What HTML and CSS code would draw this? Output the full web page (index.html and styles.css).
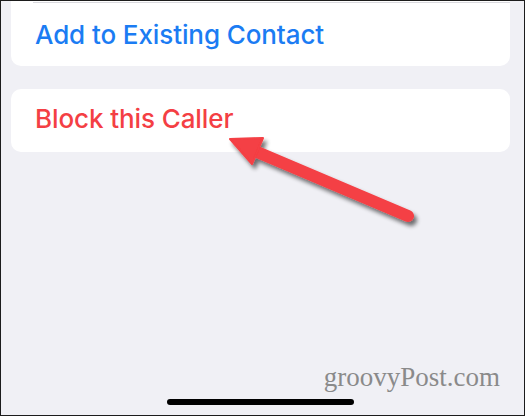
FILE: index.html
```html
<html>
  <head>
    <link rel="stylesheet" href="styles.css">
  </head>
  <body>
    <div class="screen">
      <div class="card first">
        <div class="sep"></div>
        <div class="row blue">Add to Existing Contact</div>
      </div>
      <div class="card second">
        <div class="row red">Block this Caller</div>
      </div>
      <div class="homebar"></div>

      <!-- callout arrow pointing at the block button -->
      <svg class="arrow" width="525" height="416" viewBox="0 0 525 416">
        <defs>
          <filter id="shade" x="-20%" y="-20%" width="140%" height="140%">
            <feGaussianBlur in="SourceAlpha" stdDeviation="2.2"/>
            <feOffset dx="3" dy="4"/>
            <feComponentTransfer><feFuncA type="linear" slope="0.55"/></feComponentTransfer>
            <feMerge><feMergeNode/><feMergeNode in="SourceGraphic"/></feMerge>
          </filter>
        </defs>
        <g filter="url(#shade)" fill="#f43f44" stroke="#f43f44">
          <line x1="408" y1="216" x2="250" y2="149" stroke-width="12" stroke-linecap="round"/>
          <polygon points="230,139 263,138 252,164" stroke-width="2" stroke-linejoin="round"/>
        </g>
      </svg>

      <div class="mark">groovyPost.com</div>
    </div>
  </body>
</html>
```

FILE: styles.css
```css
body {
    margin: 0;
}

.screen {
    position: relative;
    width: 525px;
    height: 416px;
    box-sizing: border-box;
    border: 1px solid #1c1c1c;
    background-color: #f0f0f5;
    padding: 0 14px 0 10px;
    display: flex;
    flex-direction: column;
    overflow: hidden;
    font-family: "Inter", "Liberation Sans", sans-serif;
}

.card {
    background-color: #fff;
    border-radius: 10px;
}

.first {
    height: 65px;
    border-radius: 0 0 10px 10px;
}

.second {
    margin-top: 23px;
    height: 63px;
}

.sep {
    height: 1px;
    margin: 1px 0 0 22px;
    background-color: #d9d9de;
}

.row {
    padding-left: 24px;
    font-size: 26px;
    font-weight: 500;
    letter-spacing: -0.1px;
}

.first .row {
    padding-top: 16px;
}

.second .row {
    padding-top: 14px;
}

.blue {
    color: #1b7cf3;
}

.red {
    color: #f43f44;
}

.homebar {
    margin: auto auto 10px auto;
    width: 187px;
    height: 6px;
    border-radius: 3px;
    background-color: #000;
}

.arrow {
    position: absolute;
    left: -1px;
    top: -1px;
}

.mark {
    position: absolute;
    right: 24px;
    top: 361px;
    font-family: "Liberation Serif", serif;
    font-size: 27px;
    color: #8a8a8a;
}
```
